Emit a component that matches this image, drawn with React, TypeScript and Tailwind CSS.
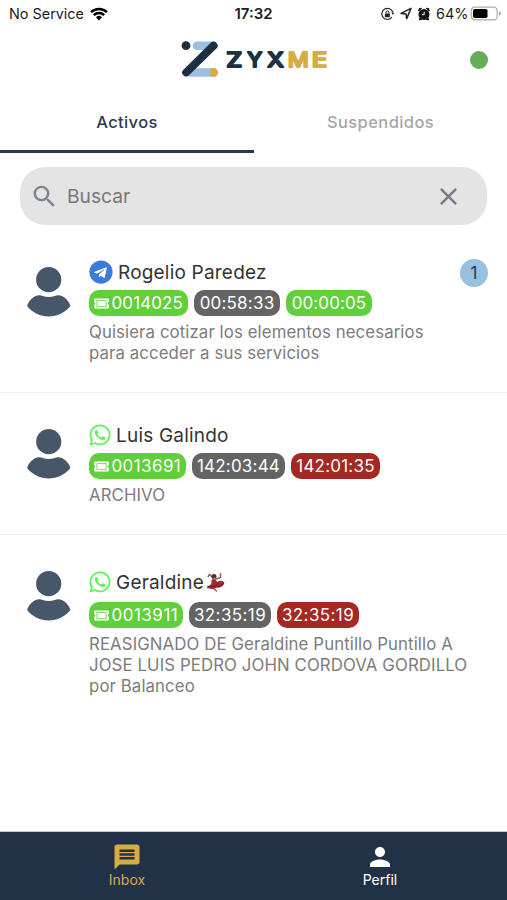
import { clsx } from 'clsx';
import { FaTelegram, FaTicketAlt, FaWhatsapp } from 'react-icons/fa';
import { MdClose, MdMessage, MdPerson, MdSearch } from 'react-icons/md';

type Tone = 'green' | 'gray' | 'red';

type Chat = {
  id: string;
  name: string;
  channel: 'telegram' | 'whatsapp';
  dancer?: boolean;
  ticket: string;
  ticketClass: string;
  timers: { value: string; tone: Tone; className: string }[];
  message: string[];
  unread?: number;
  rowClass: string;
  nameClass: string;
};

const TONES: Record<Tone, string> = {
  green: 'bg-[#5fd03a]',
  gray: 'bg-[#646464]',
  red: 'bg-[#a52822]',
};

const CHATS: Chat[] = [
  {
    id: '1',
    name: 'Rogelio Paredez',
    channel: 'telegram',
    ticket: '0014025',
    ticketClass: 'w-[99px] tracking-[0.1px]',
    timers: [
      { value: '00:58:33', tone: 'gray', className: 'w-[86px] tracking-[0.2px]' },
      { value: '00:00:05', tone: 'green', className: 'w-[86px] tracking-[0.1px]' },
    ],
    message: ['Quisiera cotizar los elementos necesarios', 'para acceder a sus servicios'],
    unread: 1,
    rowClass: 'h-[162px]',
    nameClass: 'mt-[29px] mb-[6px]',
  },
  {
    id: '2',
    name: 'Luis Galindo',
    channel: 'whatsapp',
    ticket: '0013691',
    ticketClass: 'w-[97px] tracking-[0.4px]',
    timers: [
      { value: '142:03:44', tone: 'gray', className: 'w-[93px] tracking-[0.2px]' },
      { value: '142:01:35', tone: 'red', className: 'w-[89px] tracking-[0.2px]' },
    ],
    message: ['ARCHIVO'],
    rowClass: 'h-[142px]',
    nameClass: 'mt-[30px] mb-[6px]',
  },
  {
    id: '3',
    name: 'Geraldine',
    channel: 'whatsapp',
    dancer: true,
    ticket: '0013911',
    ticketClass: 'w-[94px] tracking-[0.5px]',
    timers: [
      { value: '32:35:19', tone: 'gray', className: 'w-[82px] tracking-[0.4px]' },
      { value: '32:35:19', tone: 'red', className: 'w-[82px] tracking-[0.4px]' },
    ],
    message: ['REASIGNADO DE Geraldine Puntillo Puntillo A', 'JOSE LUIS PEDRO JOHN CORDOVA GORDILLO', 'por Balanceo'],
    rowClass: 'h-[296px]',
    nameClass: 'mt-[35px] mb-[8px]',
  },
];

function StatusBar() {
  return (
    <div className="flex h-7 items-center text-[15px] text-[#1c1c1c]">
      <div className="flex w-[220px] items-center pl-[9px]">
        <span className="w-[81px] whitespace-nowrap text-[14.4px]">No Service</span>
        <svg className="h-[14px] w-[18px]" viewBox="0 0 18 14" fill="none" stroke="#000" strokeWidth="2.5">
          <path d="M1 5.2a11.5 11.5 0 0 1 16 0M3.8 8.2a7.5 7.5 0 0 1 10.4 0" />
          <path d="M6 10.3a4.3 4.3 0 0 1 6 0L9 13.5z" fill="#000" stroke="none" />
        </svg>
      </div>
      <span className="w-[67px] text-center text-[15px] font-semibold">17:32</span>
      <div className="flex flex-1 items-center pl-[94px]">
        <svg className="h-[14px] w-[13px]" viewBox="0 0 13 14" fill="none" stroke="#222" strokeWidth="1.2">
          <path d="M11.8 5.2A5.6 5.6 0 1 0 11 10.2" />
          <path d="M10.3 5.5h3L12 8z" fill="#222" stroke="none" />
          <rect x="3.9" y="6.4" width="5" height="3.9" rx=".5" fill="#222" stroke="none" />
          <path d="M5 6.5V5.3a1.4 1.4 0 0 1 2.8 0v1.2" strokeWidth="1" />
        </svg>
        <svg className="ml-[6px] h-[13px] w-[12px]" viewBox="0 0 12 13" fill="none" stroke="#222" strokeWidth="1.5" strokeLinejoin="round">
          <path d="M1 6.4 11 1.4 6.7 11.6 6 7z" />
        </svg>
        <svg className="ml-[6px] h-[14px] w-[12px]" viewBox="0 0 12 14" fill="#111">
          <circle cx="6" cy="7.4" r="5.5" />
          <path d="M.8 4 1.2 1.6 3.6 1.2zM11.2 4 10.8 1.6 8.4 1.2zM1.4 13l.8-2.4 1.6 1.6zM10.6 13l-.8-2.4-1.6 1.6z" stroke="#111" />
          <path d="M6.2 4.8v2.9H4" fill="none" stroke="#fff" strokeWidth="1" />
        </svg>
        <span className="ml-[6px] w-[34px] whitespace-nowrap text-[14.4px]">64%</span>
        <svg className="h-[15px] w-[32px]" viewBox="0 0 32 15">
          <rect x="1.2" y="1.2" width="26" height="12.6" rx="3.6" fill="#fff" stroke="#aaa" strokeWidth="1.2" />
          <rect x="3" y="3" width="14.5" height="9" rx="1.8" fill="#000" />
          <path d="M29 5.2q2 .6 2 2.3t-2 2.3z" fill="#aaa" />
        </svg>
      </div>
    </div>
  );
}

const WORDMARK = [
  { letter: 'Z', x: 45.3, width: 16, color: '#1b3044' },
  { letter: 'Y', x: 66.3, width: 15, color: '#1b3044' },
  { letter: 'X', x: 86.3, width: 16.5, color: '#1b3044' },
  { letter: 'M', x: 106.8, width: 21, color: '#d6ac45' },
  { letter: 'E', x: 130.8, width: 15.5, color: '#d6ac45' },
];

function Logo() {
  return (
    <svg className="h-[38px] w-[148px]" viewBox="0 0 148 38">
      <path d="M16 5.7h16M10 32.5h22" stroke="#9bc0e0" strokeWidth="8.6" strokeLinecap="round" />
      <path d="M26 10h6l-6 6z" fill="#9bc0e0" />
      <path d="M5.2 32.5 32.6 5.7" stroke="#1b3044" strokeWidth="8" strokeLinecap="round" />
      <circle cx="5" cy="5.7" r="4.4" fill="#1b3044" />
      <circle cx="32.7" cy="32.5" r="4.4" fill="#d6ac45" />
      <g fontFamily="Inter" fontSize="19.8" fontWeight="500" strokeWidth="1.8" strokeLinejoin="round">
        {WORDMARK.map(({ letter, x, width, color }) => (
          <text key={letter} x={x} y="26.5" textLength={width} lengthAdjust="spacingAndGlyphs" fill={color} stroke={color}>
            {letter}
          </text>
        ))}
      </g>
    </svg>
  );
}

function Avatar() {
  return (
    <svg className="mt-[36px] h-[50px] w-[44px]" viewBox="0 0 44 50" fill="#475769">
      <circle cx="21.7" cy="12.7" r="12.6" />
      <path d="M.1 39C1.5 34 6 29 11.5 28.2 14.5 27.8 17.5 30 21.7 30S29 27.8 32 28.2C37.5 29 42 34 43.4 39 38 45.8 30 49.4 21.7 49.4S5.4 45.8.1 39z" />
    </svg>
  );
}

function Dancer() {
  return (
    <svg className="ml-px h-[20px] w-[20px]" viewBox="0 0 20 20" fill="none">
      <path d="M8.5 6 4.5 2.5 3.2 4.5M11 7l4.5-1.5v-4M8 16l3.5 3" stroke="#9a6650" strokeWidth="1.6" strokeLinecap="round" />
      <path d="M6.500 8c2-2 4.500-1 5 1l1 1c2-2 5-1.500 7 .5-1 4-4 5.500-7.500 5-2 2-8 2-11-.5 3-.5 4.500-2 5.500-4z" fill="#a82635" />
      <path d="M2.500 14c4 2 9 0 11-3M12 15c3-.5 4.500-1.500 6.500-3.500" stroke="#5b1723" strokeWidth="1" />
      <circle cx="9" cy="4.6" r="2.5" fill="#49302c" />
      <path d="M9.500 5.500v2" stroke="#a97560" strokeWidth="2" />
    </svg>
  );
}

function ChatRow({ chat }: { chat: Chat }) {
  return (
    <li className={clsx('flex border-b border-[#f1f1f1] pl-[27px] last:border-b-0', chat.rowClass)}>
      <Avatar />
      <div className="ml-[18px] flex-1">
        <div className={clsx('flex h-6 items-center', chat.nameClass)}>
          {chat.channel === 'telegram' ? (
            <FaTelegram className="mr-[5px] size-6 text-[#3b7bdb]" />
          ) : (
            <FaWhatsapp className="-ml-px mr-[4px] size-6 text-[#5df25a]" />
          )}
          <span className="whitespace-nowrap pt-[2px] text-[19px] tracking-[0.2px] text-[#333]">{chat.name}</span>
          {chat.dancer && <Dancer />}
        </div>
        <div className="flex h-[26px] gap-[6px] text-[17px] leading-[26px] text-white">
          <span className={clsx('flex items-center rounded-[10px] bg-[#5fd03a] pl-[4.5px]', chat.ticketClass)}>
            <FaTicketAlt className="mr-[3px] size-[15px]" />
            {chat.ticket}
          </span>
          {chat.timers.map((timer, i) => (
            <span key={i} className={clsx('rounded-[10px] text-center', timer.className, TONES[timer.tone])}>
              {timer.value}
            </span>
          ))}
        </div>
        <p className="mt-[6px] whitespace-nowrap text-[16.8px] leading-[20.8px] tracking-[0.1px] text-[#7c7c7c]">
          {chat.message.map((line) => (
            <span key={line} className="block">{line}</span>
          ))}
        </p>
      </div>
      {chat.unread && (
        <span className="mr-[19px] mt-[28px] flex size-7 items-center justify-center rounded-full bg-[#98c0df] pt-[2px] text-[17px] text-[#263747]">
          {chat.unread}
        </span>
      )}
    </li>
  );
}

export default function App() {
  return (
    <div className="flex h-[900px] w-[507px] flex-col overflow-hidden bg-white font-['Inter',sans-serif]">
      <StatusBar />
      <header className="flex h-[64px] items-start pt-[12px]">
        <div className="pl-[181px]">
          <Logo />
        </div>
        <span className="ml-auto mr-[19px] mt-[11px] size-[18px] rounded-full bg-[#67ab5b]" />
      </header>

      <nav className="flex h-[61px] text-[16.5px] font-medium tracking-[0.4px]">
        <button className="w-[254px] border-b-[3px] border-[#26384c] pt-[2px] text-[#2c3b4d]">Activos</button>
        <button className="flex-1 border-b-[3px] border-transparent pt-[2px] text-[#a6a6a6]">Suspendidos</button>
      </nav>

      <div className="mx-[20px] mt-[14px] flex h-[58px] shrink-0 items-center rounded-[25px] bg-[#e4e4e4] pl-[10px] pr-[24px]">
        <MdSearch className="size-[29px] text-[#7b838c]" />
        <span className="ml-[8px] flex-1 pt-px text-[19.2px] text-[#777]">Buscar</span>
        <MdClose className="size-[29px] text-[#717b86]" />
      </div>

      <ul className="mt-[6px] min-h-0 flex-1">
        {CHATS.map((chat) => (
          <ChatRow key={chat.id} chat={chat} />
        ))}
      </ul>

      <footer className="flex h-[69px] shrink-0 border-t border-[#c5cad0] bg-[#213248] text-[14px] leading-[16px]">
        <div className="flex w-[254px] flex-col items-center pt-[10px] text-[#d6ac45]">
          <MdMessage className="size-[30px]" />
          Inbox
        </div>
        <div className="flex w-[252px] flex-col items-center pt-[10px] text-white">
          <MdPerson className="size-[30px]" />
          Perfil
        </div>
      </footer>
    </div>
  );
}
